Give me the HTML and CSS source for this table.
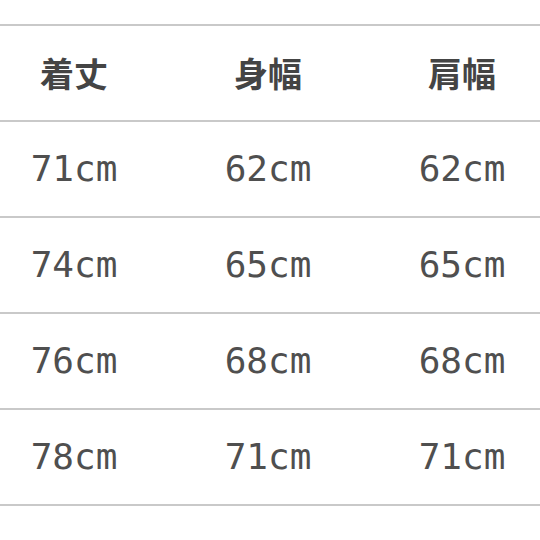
FILE: index.html
```html
<!DOCTYPE html>
<html lang="ja">
<head>
<meta charset="utf-8">
<link rel="stylesheet" href="styles.css">
</head>
<body>
<div class="table">
  <div class="row head">
    <div class="cell">着丈</div>
    <div class="cell">身幅</div>
    <div class="cell">肩幅</div>
  </div>
  <div class="row">
    <div class="cell">71cm</div>
    <div class="cell">62cm</div>
    <div class="cell">62cm</div>
  </div>
  <div class="row">
    <div class="cell">74cm</div>
    <div class="cell">65cm</div>
    <div class="cell">65cm</div>
  </div>
  <div class="row">
    <div class="cell">76cm</div>
    <div class="cell">68cm</div>
    <div class="cell">68cm</div>
  </div>
  <div class="row">
    <div class="cell">78cm</div>
    <div class="cell">71cm</div>
    <div class="cell">71cm</div>
  </div>
</div>
</body>
</html>
```

FILE: styles.css
```css
html, body {
  margin: 0;
  padding: 0;
  background: #ffffff;
}
body {
  width: 540px;
  height: 540px;
  overflow: hidden;
}
.table {
  margin-top: 24px;
  border-top: 2px solid #c9c9c9;
}
.row {
  display: grid;
  grid-template-columns: 148px 240px 148px;
  height: 94px;
  align-items: center;
  border-bottom: 2px solid #c9c9c9;
}
.cell {
  text-align: center;
  font-family: "DejaVu Sans Mono", "Liberation Mono", monospace;
  font-size: 36px;
  color: #4f4f4f;
  line-height: 1;
}
.head .cell {
  font-family: "Noto Sans CJK JP", sans-serif;
  font-weight: 700;
  font-size: 34px;
  color: #444444;
}
```
